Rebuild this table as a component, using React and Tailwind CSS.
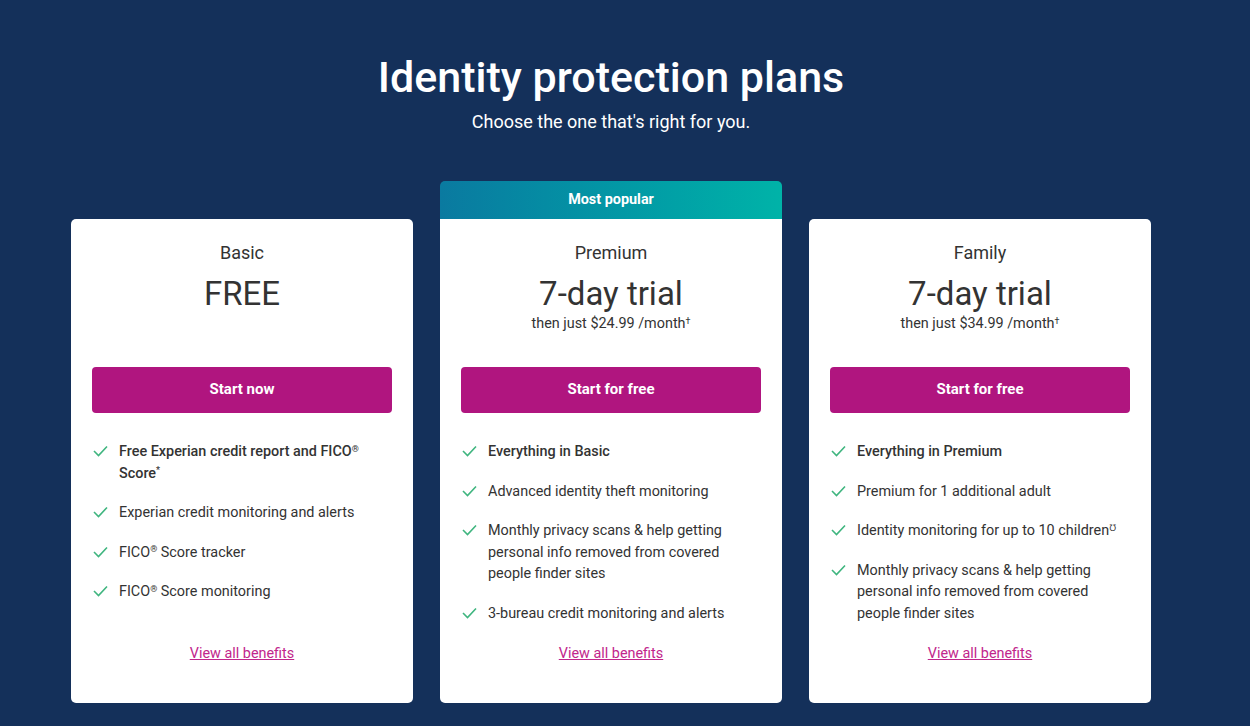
import React from 'react'

const plans = [
  {
    name: 'Basic',
    price: 'FREE',
    sub: null,
    cta: 'Start now',
    features: [
      { bold: true, text: <>Free Experian credit report and FICO<sup className="text-[9px]">®</sup> Score<sup className="text-[9px]">*</sup></> },
      { text: 'Experian credit monitoring and alerts' },
      { text: <>FICO<sup className="text-[9px]">®</sup> Score tracker</> },
      { text: <>FICO<sup className="text-[9px]">®</sup> Score monitoring</> },
    ],
  },
  {
    name: 'Premium',
    price: '7-day trial',
    sub: '$24.99',
    cta: 'Start for free',
    popular: true,
    features: [
      { bold: true, text: 'Everything in Basic' },
      { text: 'Advanced identity theft monitoring' },
      { text: 'Monthly privacy scans & help getting personal info removed from covered people finder sites' },
      { text: '3-bureau credit monitoring and alerts' },
    ],
  },
  {
    name: 'Family',
    price: '7-day trial',
    sub: '$34.99',
    cta: 'Start for free',
    features: [
      { bold: true, text: 'Everything in Premium' },
      { text: 'Premium for 1 additional adult' },
      { text: <>Identity monitoring for up to 10 children<sup className="text-[9px]">℧</sup></> },
      { text: 'Monthly privacy scans & help getting personal info removed from covered people finder sites' },
    ],
  },
]

function Check() {
  return (
    <svg width="15" height="12" viewBox="0 0 15 12" className="shrink-0 mt-[4px]">
      <polyline points="1,6 5.5,10.5 14,1.5" fill="none" stroke="#3fb57f" strokeWidth="1.6" />
    </svg>
  )
}

function PlanCard({ plan }) {
  return (
    <div className="w-[342px] flex flex-col">
      {plan.popular && (
        <div className="h-[38px] rounded-t-[5px] bg-gradient-to-r from-[#0a7aa0] to-[#00b3a8] flex items-center justify-center text-white text-[14.4px] font-bold">
          Most popular
        </div>
      )}
      <div className={`bg-white h-[484px] flex flex-col px-[21px] pt-[22px] pb-[39px] ${plan.popular ? 'rounded-b-[5px]' : 'rounded-[5px]'}`}>
        <div className="h-[126px] flex flex-col items-center text-[#333]">
          <div className="text-[18px] leading-[24px]">{plan.name}</div>
          <div className="text-[33px] leading-[40px] mt-[9px]">{plan.price}</div>
          {plan.sub && (
            <div className="text-[14.4px] leading-[20px]">
              then just {plan.sub} /month<sup className="text-[9px]">†</sup>
            </div>
          )}
        </div>
        <button className="h-[46px] rounded-[4px] bg-[#b0157f] text-white text-[15px] font-bold pb-[1px]">
          {plan.cta}
        </button>
        <ul className="mt-[28px] flex flex-col gap-[18px] pl-[1px]">
          {plan.features.map((f, i) => (
            <li key={i} className="flex gap-[11px] text-[14.4px] leading-[21.6px] text-[#333]">
              <Check />
              <span className={f.bold ? 'font-medium' : ''}>{f.text}</span>
            </li>
          ))}
        </ul>
        <a href="#" className="mt-auto self-center text-[14.4px] leading-[20px] text-[#c1268c] underline">
          View all benefits
        </a>
      </div>
    </div>
  )
}

export default function App() {
  return (
    <div className="min-h-screen bg-[#14305a] font-['Roboto',sans-serif] pt-[50px]">
      <div className="w-[1080px] ml-[71px] flex flex-col items-center">
        <h1 className="text-white text-[43px] leading-[54px] font-medium">Identity protection plans</h1>
        <p className="text-white text-[18px] leading-[24px] mt-[6px]">Choose the one that's right for you.</p>
        <div className="mt-[47px] flex items-end gap-[27px]">
          {plans.map((p) => (
            <PlanCard key={p.name} plan={p} />
          ))}
        </div>
      </div>
    </div>
  )
}
